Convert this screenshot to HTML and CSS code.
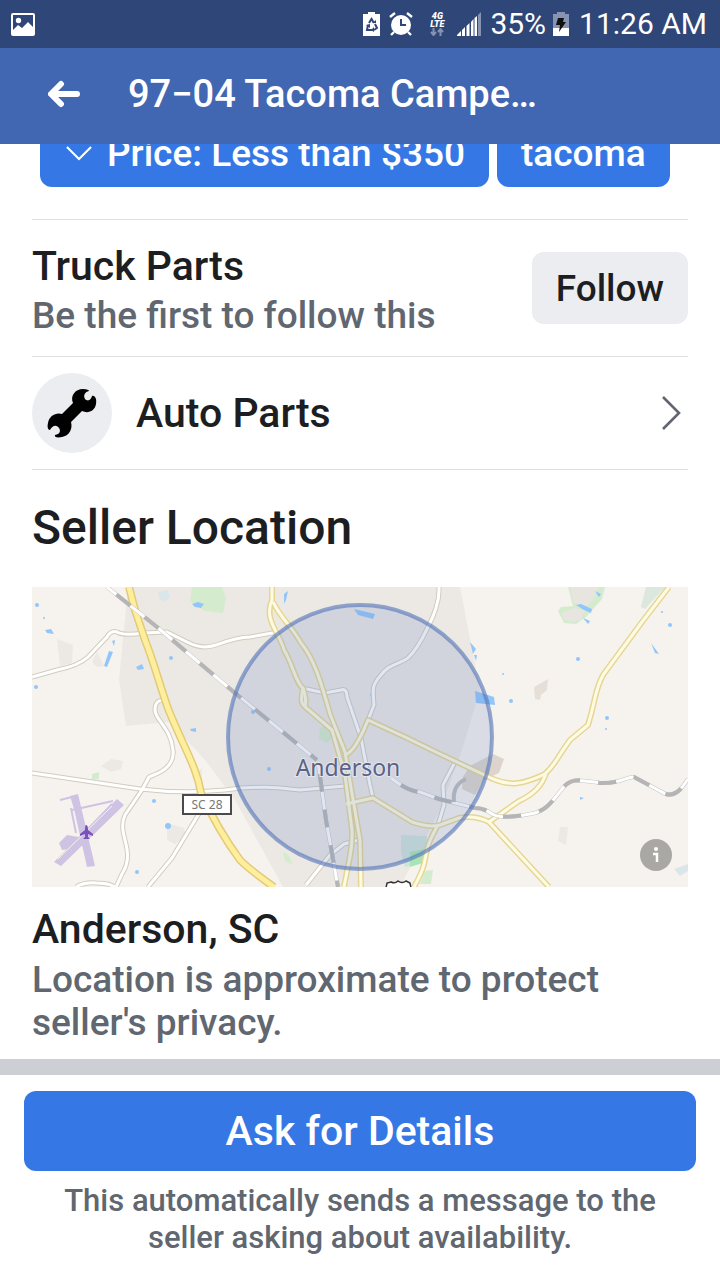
FILE: index.html
```html
<!DOCTYPE html>
<html lang="en">
<head>
<meta charset="utf-8">
<meta name="viewport" content="width=device-width, initial-scale=1">
<title>97–04 Tacoma Camper</title>
<link rel="stylesheet" href="styles.css">
</head>
<body>
<div class="status-bar">
  <svg class="status-photo" width="24" height="23" viewBox="0 0 24 23" aria-hidden="true"><rect x="1" y="1" width="22" height="21" rx="1" fill="none" stroke="#fff" stroke-width="2"/><circle cx="7.500" cy="7.500" r="2.700" fill="#fff"/><path d="M2 17l5-5 4 3 6-6 5 5v7H2z" fill="#fff"/></svg>
  <div class="status-right">
    <svg width="17" height="24" viewBox="0 0 17 24" aria-hidden="true"><path d="M5 0h7v2h5v22H0V2h5z" fill="#fff"/><g fill="none" stroke="#2f4678" stroke-width="2"><path d="M6 11l2.500-4 2.500 4M12 12l2 4-3 2M9 18H4l1-5"/></g><path d="M9 11h4V8zM11 15v5l-3-2zM3 13l4-1v4z" fill="#2f4678"/></svg>
    <svg class="status-alarm" width="24" height="24" viewBox="0 0 24 24" aria-hidden="true"><circle cx="12" cy="13" r="10" fill="#fff"/><path d="M1 5l5-4M23 5l-5-4M5 20l-3 3M19 20l3 3" stroke="#fff" stroke-width="2.400"/><path d="M12 7v6h5" fill="none" stroke="#2f4678" stroke-width="2"/></svg>
    <span class="network"><span>4G</span><span>LTE</span><svg width="14" height="8" viewBox="0 0 14 8" aria-hidden="true"><path d="M3.500 0v6M1 4l2.500 3L6 4M10.500 8V2M8 4l2.500-3L13 4" fill="none" stroke="#8593b3" stroke-width="2"/></svg></span>
    <svg class="status-signal" width="24" height="24" viewBox="0 0 24 24" aria-hidden="true"><path d="M0 24v-1l4-4v5zM5 24v-6l3-3v9zM9.500 24V14l3-3v13zM14 24V10l2.500-3v17zM17.500 24V6L20 4v20z" fill="#fff"/><path d="M21 24V3l3-3v24z" fill="#8593b3"/></svg>
    <span>35%</span>
    <svg class="status-battery" width="16" height="24" viewBox="0 0 16 24" aria-hidden="true"><path d="M4 0h8v2h4v14H0V2h4z" fill="#8793b2"/><path d="M0 16h16v8H0z" fill="#fff"/><path d="M5 6h6l-1 4h3L6 20l1-7H3z" fill="#111"/></svg>
    <span>11:26 AM</span>
  </div>
</div>
<header class="app-bar">
  <button class="back" aria-label="Back"><svg width="32" height="28" viewBox="0 0 32 28" aria-hidden="true"><path d="M29 14H4M13 4L3 14l10 10" fill="none" stroke="#fff" stroke-width="6" stroke-linecap="round" stroke-linejoin="round"/></svg></button>
  <h1 class="app-title">97−04 Tacoma Campe…</h1>
</header>
<main>
  <div class="chips">
    <button class="chip chip-price"><svg width="26" height="15" viewBox="0 0 28 16" aria-hidden="true"><path d="M1 1l13 13L27 1" fill="none" stroke="#fff" stroke-width="2.200"/></svg>Price: Less than $350</button>
    <button class="chip">tacoma</button>
  </div>
  <div class="content">
    <section class="topic">
      <div>
        <h2 class="item-title">Truck Parts</h2>
        <p class="secondary">Be the first to follow this</p>
      </div>
      <button class="follow">Follow</button>
    </section>
    <a class="category" href="#auto-parts">
      <span class="category-icon"><svg width="50" height="50" viewBox="0 0 50 50" aria-hidden="true"><path d="M15 26L26 15C23 8 28 1 36 1c4 0 6 1 6 2-4 1-6 4-4 8 3 3 6 1 7-3 3-1 5 3 4 8-1 7-8 10-14 7L24 34c2 7-2 14-9 15-5 1-8 0-7-2 5-1 6-4 4-7-3-4-7-2-9 2-2 0-3-3-2-7 1-7 8-11 14-9z"/></svg></span>
      <span class="category-name">Auto Parts</span>
      <svg class="chevron" width="20" height="34" viewBox="0 0 20 34" aria-hidden="true"><path d="M2 1l16 16L2 33" fill="none" stroke="#606570" stroke-width="2.600"/></svg>
    </a>
    <h2 class="location-heading">Seller Location</h2>
    <svg class="map" viewBox="32 587 656 300" role="img" aria-label="Map of Anderson, SC">
      <rect x="32" y="587" width="656" height="300" fill="#f6f3ee"/>
      <g fill="#ece9e4">
        <path d="M128 587H460L480 690 462 750 440 810 400 887H283L235 800 205 760 170 722 126 726 119 680z"/>
        <path d="M57 639l16 6-1 18-12 3zM97 652l7 14-7 1-5-5zM101 766l10-7 12 2-2 8-10 3zM167 823l17 5 2 8-11 8-8-4zM192 777l10-9v16z"/>
        <path d="M560 827h8l-2 18-8-4z"/>
      </g>
      <path d="M534 687l14-8-1 11-6 5-1 5-5-1z" fill="#e6dfd7"/>
      <path d="M470 766l23-12 11 5-5 14-15 7-9 15-13-6 1-12z" fill="#ddd5cd"/>
      <g fill="#d4eccd">
        <path d="M192 587h30l4 12-3 14-18-2-15-10z"/>
        <path d="M568 587h37l-3 12-16 18-10 7-12-1-6-12 3-4 12-1z"/>
        <path d="M646 587h19l-20 22-4-2z" fill="#dce8dd"/>
        <path d="M320 728l8-2 4 12-5 5-8-4zM283 851l6 5 4 9-8-4zM92 774l7-2v7l-7 1z"/>
        <path d="M401 835l26 1-1 27-21 4-4-14z" fill="#cfe4d9"/>
        <path d="M410 852l14-3 1 13-15 5z" fill="#a8e5b5"/>
        <path d="M425 871l8-1-2 14h-11z"/>
      </g>
      <g fill="#e8e5e1"><path d="M570 587h29l-7 14-6 6-12-4zM562 613l12-5 11 2-4 10-9 2-9-3z"/></g>
      <g fill="#91c6fb">
        <path d="M192 604l6-2 6 2-3 4-6-1zM284 594l4-3-2 9-2 4zM45 630l6-1 3 5-7-1zM112 641l3-1-1 6zM109 651l4 1-6 15-3-1zM136 667l6-3 2 5-6 1zM190 729l6-1v4l-5-1z"/>
        <circle cx="37" cy="605" r="2"/><circle cx="44" cy="618" r="1"/><circle cx="36" cy="687" r="2"/><circle cx="171" cy="658" r="2"/><circle cx="154" cy="801" r="2"/><circle cx="168" cy="826" r="3"/><circle cx="137" cy="872" r="2"/><circle cx="253" cy="712" r="2"/>
        <path d="M354 609l21 5-2 5-15-4zM475 691l19 6 1 8-19-2zM470 642l6 7-3 5zM474 655h3l-1 6zM576 605l5-1 11 5-1 4-7-3zM595 591l6 3-2 3zM651 643l8 11-4-1zM583 618l7 3-2 3zM580 797l4 1-4 2zM370 694l3-2-1 8z"/>
        <circle cx="578" cy="659" r="2"/><circle cx="503" cy="674" r="1"/><circle cx="511" cy="701" r="2"/><circle cx="607" cy="718" r="2"/><circle cx="606" cy="729" r="1"/><circle cx="662" cy="612" r="1"/><circle cx="670" cy="625" r="2"/><circle cx="269" cy="769" r="2"/>
        <path d="M158 592l10-2 2 8-7 4-4-4zM674 869l14-5v7l-8 5z" fill="#dbe6eb"/>
      </g>
      <g fill="#cfc3e3">
        <path d="M70 796l8-2 17 72-8 1-13-58zM54 862l63-63 7 6-63 61zM59 843l8-8 12 2-4 11-13 2z"/>
        <path d="M60 800l12-3M71 808l5 25M72 810l41-9M60 858l52-54" fill="none" stroke="#cfc3e3" stroke-width="2"/>
        <path d="M58 859l54-53" stroke="#f6f3ee"/>
      </g>
      <path d="M86 825q2 0 2 5l5 4v2l-5-2v3l2 2h-7l2-2v-3l-5 2v-2l5-4q0-5 1-5z" fill="#7951b8"/>
      <defs>
        <g id="minor">
          <path d="M32 677L57 670Q78 666 88 657L107 637Q111 630 117 632 124 636 143 633L167 632 187 642Q202 650 216 645 238 637 250 637L278 632"/>
          <path d="M165 700Q155 699 155 710C155 720 171 728 173 750 175 768 157 774 149 777L142 790 125 815C116 835 137 850 122 874L116 887"/>
          <path d="M32 773L140 789Q182 794 225 790C260 785 280 788 300 790L345 786"/>
          <path d="M200 812L172 858 148 887M76 887Q84 882 96 883 109 883 115 887"/>
          <path d="M439 587Q440 605 427 629 418 648 408 658C398 665 389 664 381 675 371 686 373 690 374 705L368 720"/>
          <path d="M302 688L325 693 341 690Q347 688 347 697L361 738 370 785 373 798M306 885L330 855 344 844 359 840M455 762L443 785 444 805 438 825"/>
        </g>
        <g id="arterial">
          <path d="M272 587V600C263 620 281 635 284 650 292 662 296 684 303 688 301 700 299 703 310 711L332 730 345 775 352 830C353 850 348 864 344 887"/>
          <path d="M273 602C282 620 291 625 301 643 314 658 322 685 330 714L345 752 354 805 360 840 361 887"/>
          <path d="M303 688Q307 700 305 707M345 755Q355 752 368 720L405 737 440 754 493 779C510 786 522 785 545 774 556 764 556 759 570 740L588 725C596 700 594 692 603 675L642 622 669 587"/>
          <path d="M346 804L373 798 412 822Q430 828 440 825L459 818Q475 815 489 822L519 801Q541 791 546 773M489 822L549 887M438 825C418 860 433 853 414 887"/>
        </g>
        <path id="highway" d="M129 587L135 610 145 640C155 665 161 690 169 711 185 750 197 768 201 793 212 817 224 838 240 860Q250 870 274 887"/>
        <g id="rail">
          <path d="M107 587L157 627 235 693 317 760"/>
          <path d="M318 762L326 820 338 887"/>
          <path d="M391 778Q407 791 420 792L439 799 475 808Q484 808 492 814 502 820 535 813C548 809 553 800 562 789 571 777 580 780 600 783 620 784 628 776 634 777L660 791Q673 800 683 786L688 779"/>
        </g>
      </defs>
      <g fill="none" stroke-linejoin="round">
        <use href="#minor" stroke="#d1ccbf" stroke-width="5"/><use href="#minor" stroke="#fff" stroke-width="3"/>
        <use href="#arterial" stroke="#e5d697" stroke-width="6"/><use href="#arterial" stroke="#fffbe1" stroke-width="3"/>
        <use href="#highway" stroke="#e2ca78" stroke-width="8"/><use href="#highway" stroke="#ffef9d" stroke-width="5"/>
        <use href="#rail" stroke="#c4c4c4" stroke-width="4"/><use href="#rail" stroke="#fff" stroke-width="3"/><use href="#rail" stroke="#b5b5b5" stroke-width="4" stroke-dasharray="18 18" stroke-dashoffset="-12"/>
        <path d="M454 802Q452 785 466 779" stroke="#bcbcbc" stroke-width="4"/>
      </g>
      <circle cx="360" cy="737" r="132" fill="#6e8ac1" fill-opacity=".21" stroke="#5475b8" stroke-opacity=".62" stroke-width="4"/>
      <text class="map-city" x="348" y="776" text-anchor="middle">Anderson</text>
      <rect x="183" y="795" width="48" height="19" fill="#fff" stroke="#4a4a4a" stroke-width="2"/>
      <text class="map-route" x="207" y="809" text-anchor="middle">SC 28</text>
      <path d="M386 888l1-5 4-1q4 2 7-1 4 3 8 0l4 2 1 5z" fill="#fff" stroke="#333" stroke-width="1.500"/>
      <circle cx="656" cy="855" r="16" fill="#aaa8a5"/><circle cx="656" cy="849" r="2" fill="#fff"/><path d="M653 854h4v8" fill="none" stroke="#fff" stroke-width="2.500"/>
    </svg>
    <h3 class="item-title place">Anderson, SC</h3>
    <p class="secondary privacy">Location is approximate to protect seller's privacy.</p>
  </div>
</main>
<footer class="action-bar">
  <button class="ask">Ask for Details</button>
  <p class="note">This automatically sends a message to the seller asking about availability.</p>
</footer>
</body>
</html>
```
FILE: styles.css
```css
* {
  box-sizing: border-box;
}

body {
  margin: 0;
  min-height: 100vh;
  background: #fff;
  color: #1c1e21;
  font-family: Roboto, "Noto Sans", sans-serif;
  font-weight: 500;
}

h1, h2, h3, p {
  margin: 0;
  font-weight: 500;
}

button {
  border: 0;
  padding: 0;
  font: inherit;
  color: inherit;
  cursor: pointer;
}

svg {
  display: block;
  flex: none;
}

.status-bar {
  display: flex;
  align-items: center;
  justify-content: space-between;
  height: 48px;
  padding: 0 13px 0 11px;
  background: #2f4678;
  color: #fff;
  font-size: 30px;
  font-weight: 400;
  line-height: 48px;
}

.status-right {
  display: flex;
  align-items: center;
  white-space: nowrap;
}

.status-alarm {
  margin-left: 9px;
}

.network {
  display: flex;
  flex-direction: column;
  align-items: center;
  width: 16px;
  margin: 0 12px 0 16px;
  font-size: 9px;
  font-style: italic;
  font-weight: 900;
  line-height: 8px;
}

.status-signal {
  margin-right: 9px;
}

.status-battery {
  margin: 0 10px 0 7px;
}

.app-bar {
  position: relative;
  z-index: 1;
  display: flex;
  align-items: center;
  gap: 48px;
  height: 96px;
  padding: 0 48px 4px;
  background: #4267b2;
  color: #fff;
}

.back {
  background: none;
}

.app-title {
  width: 409px;
  overflow: hidden;
  white-space: nowrap;
  font-size: 38px;
  line-height: 48px;
}

.chips {
  display: flex;
  gap: 8px;
  margin-top: -25px;
  padding: 0 40px;
}

.chip {
  display: flex;
  align-items: center;
  gap: 15px;
  height: 68px;
  padding: 0 24px;
  border-radius: 12px;
  background: #3578e5;
  color: #fff;
  font-size: 37px;
  white-space: nowrap;
}

.chip-price {
  padding-left: 26px;
}

.content {
  padding: 32px 32px 0;
}

.topic {
  display: flex;
  align-items: flex-start;
  justify-content: space-between;
  padding: 20px 0 16px;
  border-top: 1px solid #dddfe2;
}

.item-title,
.category-name {
  font-size: 41px;
  line-height: 52px;
}

.secondary {
  color: #606770;
  font-size: 37px;
  line-height: 43px;
}

.topic .secondary {
  line-height: 48px;
}

.follow {
  height: 72px;
  margin-top: 12px;
  padding: 0 24px;
  border-radius: 12px;
  background: #ebedf0;
  font-size: 37px;
}

.category {
  display: flex;
  align-items: center;
  gap: 24px;
  padding: 16px 7px 16px 0;
  border-top: 1px solid #dddfe2;
  border-bottom: 1px solid #dddfe2;
  color: inherit;
  text-decoration: none;
}

.category-icon {
  display: grid;
  place-items: center;
  width: 80px;
  height: 80px;
  border-radius: 50%;
  background: #ebedf0;
}

.chevron {
  margin-left: auto;
}

.location-heading {
  padding: 27px 0 28px;
  font-size: 48px;
  line-height: 62px;
}

.map {
  width: 100%;
  height: auto;
}

.map-city {
  fill: #5c6283;
  stroke: #e4e6ee;
  stroke-width: 2px;
  paint-order: stroke;
  font-family: "Noto Sans", sans-serif;
  font-size: 23px;
  font-weight: 400;
}

.map-route {
  fill: #777;
  font-family: "Noto Sans", sans-serif;
  font-size: 12px;
  font-weight: 400;
}

.place {
  padding-top: 16px;
}

.privacy {
  padding: 3px 0 15px;
}

.action-bar {
  padding: 16px 24px 24px;
  border-top: 16px solid #ccd0d5;
  text-align: center;
}

.ask {
  width: 100%;
  height: 80px;
  border-radius: 12px;
  background: #3578e5;
  color: #fff;
  font-size: 41px;
}

.note {
  padding: 11px 32px 0;
  color: #606770;
  font-size: 31px;
  line-height: 37px;
}
```
